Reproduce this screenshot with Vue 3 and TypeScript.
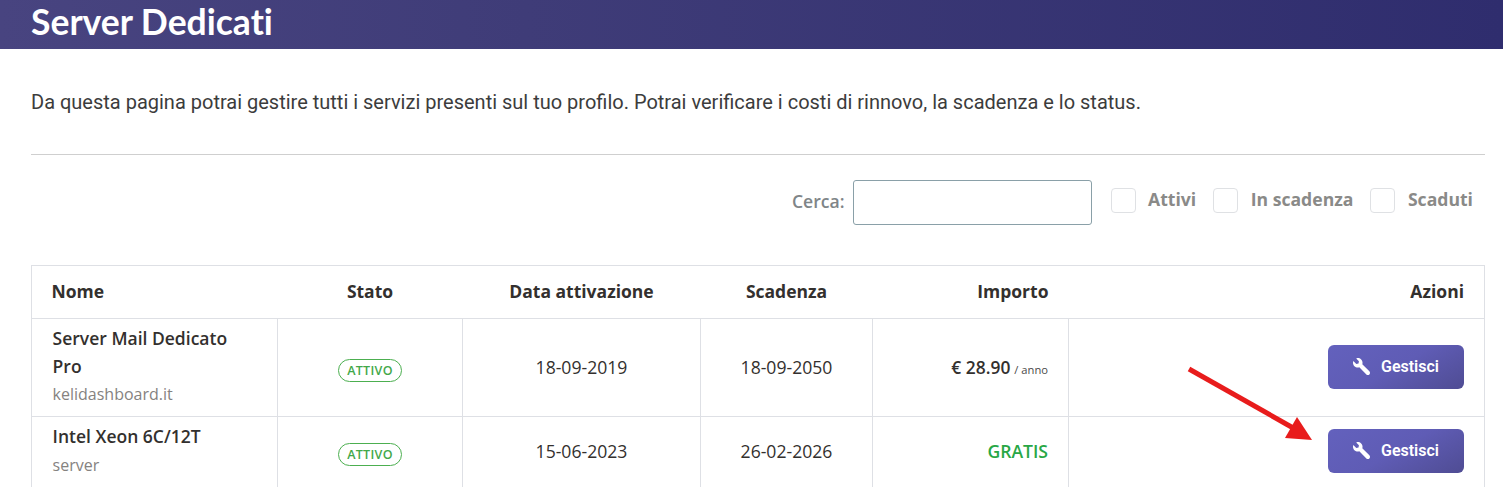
<script setup lang="ts">
interface Row {
  name: string
  sub: string
  start: string
  end: string
  price?: string
}
const rows: Row[] = [
  { name: 'Server Mail Dedicato Pro', sub: 'kelidashboard.it', start: '18-09-2019', end: '18-09-2050', price: '€ 28.90' },
  { name: 'Intel Xeon 6C/12T', sub: 'server', start: '15-06-2023', end: '26-02-2026' },
]
const filters = ['Attivi', 'In scadenza', 'Scaduti']
</script>

<template>
  <div class="page">
    <header class="banner"><h1>Server Dedicati</h1></header>
    <main class="content">
      <p class="intro">Da questa pagina potrai gestire tutti i servizi presenti sul tuo profilo. Potrai verificare i costi di rinnovo, la scadenza e lo status.</p>
      <hr class="rule" />
      <div class="toolbar">
        <label class="search"><span class="lift">Cerca:</span> <input type="text" /></label>
        <label v-for="f in filters" :key="f" class="check"><span class="box"></span><span class="lift">{{ f }}</span></label>
      </div>
      <table class="services">
        <colgroup>
          <col class="c1" /><col class="c2" /><col class="c3" /><col class="c4" /><col class="c5" /><col />
        </colgroup>
        <thead>
          <tr>
            <th class="left">Nome</th>
            <th>Stato</th>
            <th>Data attivazione</th>
            <th>Scadenza</th>
            <th class="right">Importo</th>
            <th class="right">Azioni</th>
          </tr>
        </thead>
        <tbody>
          <tr v-for="r in rows" :key="r.name">
            <td class="left name">
              <div class="title">{{ r.name }}</div>
              <div class="sub">{{ r.sub }}</div>
            </td>
            <td class="state"><span class="badge">ATTIVO</span></td>
            <td>{{ r.start }}</td>
            <td>{{ r.end }}</td>
            <td class="right">
              <template v-if="r.price"><strong class="price">{{ r.price }}</strong> <small>/ anno</small></template>
              <strong v-else class="free">GRATIS</strong>
            </td>
            <td class="right">
              <button class="manage" type="button">
                <svg viewBox="0 0 512 512" width="17" height="17" aria-hidden="true">
                  <path fill="currentColor" transform="translate(512 0) scale(-1 1)" d="M507.7 109.1c-2.2-9-13.5-12.1-20.1-5.5l-74.4 74.4-67.9-11.3-11.3-67.9 74.4-74.4c6.6-6.6 3.4-17.9-5.7-20.2-47.4-11.7-99.5 1-136.5 38-39.6 39.6-50.7 97.1-34.3 147L18.7 402.8c-25 25-25 65.5 0 90.5s65.5 25 90.5 0l213.2-213.2c50 16.6 107.5 5.4 147.2-34.3 37.1-37.1 49.7-89.3 38.1-136.7z" />
                </svg>
                <span>Gestisci</span>
              </button>
            </td>
          </tr>
        </tbody>
      </table>
    </main>
    <svg class="arrow" viewBox="0 0 1503 487" aria-hidden="true">
      <line x1="1189" y1="369" x2="1295" y2="429" stroke="#e81c1c" stroke-width="5" />
      <polygon points="1297,417 1312,440 1285,438" fill="#e81c1c" />
    </svg>
  </div>
</template>

<style>
html, body { margin: 0; overflow: hidden; background: #fff; }
</style>

<style scoped>
.page { position: relative; width: 1503px; height: 487px; overflow: hidden; font-family: "Open Sans", sans-serif; color: #33302e; }
.banner { height: 49px; padding-left: 31px; background: linear-gradient(90deg, #484480 0%, #3f3c78 35%, #2f2d6e 100%); display: flex; align-items: center; box-sizing: border-box; }
.banner h1 { margin: 0; font: 700 35.5px/43px Lato, sans-serif; font-variant-ligatures: none; color: #fff; position: relative; top: -3px; }
.content { padding: 0 18px 0 31px; }
.intro { margin: 0; padding-top: 41px; font: 400 20px/24px Roboto, sans-serif; color: #3c3c3c; }
.rule { margin: 40px 0 0; border: 0; border-top: 1px solid #cfcfcf; height: 0; }
.toolbar { display: flex; justify-content: flex-end; align-items: flex-start; margin-top: 25px; height: 85px; font-weight: 700; font-size: 17.6px; color: #8a8a88; padding-right: 12px; }
.lift { margin-bottom: 2px; }
.search { display: flex; align-items: center; gap: 8px; font-weight: 600; color: #7f8588; }
.search .lift { margin-bottom: 4px; }
.search input { width: 239px; height: 45px; box-sizing: border-box; border: 1px solid #8aa0a8; border-radius: 3px; background: #fff; outline: none; }
.check { display: flex; align-items: center; height: 40px; margin-left: 19px; }
.check + .check { margin-left: 17px; }
.box { width: 25px; height: 25px; box-sizing: border-box; border: 1px solid #dfe1e4; border-radius: 4px; margin-right: 12.5px; }
.services { width: 1454px; table-layout: fixed; border-collapse: collapse; font-size: 17.6px; background: #fff; }
.c1 { width: 246px; }
.c2 { width: 185px; }
.c3 { width: 238px; }
.c4 { width: 172px; }
.c5 { width: 196px; }
.services th, .services td { border: 1px solid #dee0e5; text-align: center; padding: 6px 20px 8px; }
.services th { height: 53px; box-sizing: border-box; border-left: 0; border-right: 0; padding: 6px 20px 8px; font-weight: 700; font-size: 17.5px; color: #33302e; }
.services th:first-child { border-left: 1px solid #dee0e5; padding-left: 19.5px; }
.services th:last-child { border-right: 1px solid #dee0e5; }
.services .left { text-align: left; }
.services .right { text-align: right; }
.services .state { padding-top: 8px; padding-bottom: 6px; }
.services .name { line-height: 28px; padding: 6px 20px 8px 20.6px; }
.title { font-weight: 600; font-size: 17.5px; line-height: 27.5px; color: #33302e; }
.sub { font-size: 16px; color: #85827f; }
.badge { display: inline-block; box-sizing: border-box; width: 64px; height: 23px; border: 1px solid #4caf50; border-radius: 12px; font-size: 12.5px; font-weight: 600; line-height: 21px; letter-spacing: .3px; color: #43a84a; }
strong { font-weight: 600; }
.price { font-size: 17.4px; position: relative; left: 0.6px; }
small { font-size: 11.2px; color: #4a4a4a; }
.free { color: #28a745; }
.manage { display: inline-flex; align-items: center; justify-content: center; gap: 11px; width: 136px; height: 44px; padding: 0; border: 0; border-radius: 6px; color: #fff; font: 600 16px Roboto, sans-serif; background: linear-gradient(150deg, #6361bd 0%, #5f5cb5 50%, #4f4c93 100%); vertical-align: middle; }
.arrow { position: absolute; inset: 0; width: 1503px; height: 487px; pointer-events: none; }
</style>
